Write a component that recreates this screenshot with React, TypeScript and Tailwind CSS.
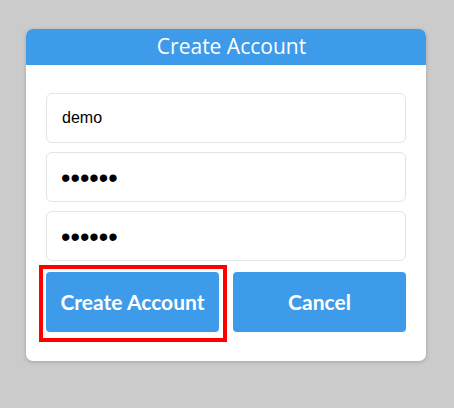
import React from "react";

export default function App() {
  const inputFont = { fontFamily: "'Liberation Sans', Arial, sans-serif" };
  return (
    <div className="w-full h-[408px] bg-[#cbcbcb] pt-[29px] pl-[26px]" style={{ fontFamily: "Lato, 'Open Sans', sans-serif" }}>
      <div className="w-[400px] h-[332px] bg-white rounded-[7px] shadow-[0_1px_4px_rgba(0,0,0,0.2)] overflow-hidden">
        <div
          className="h-[36px] bg-[#3e9bea] flex items-center justify-center text-white text-[21px] pl-[11px]"
          style={{ fontFamily: "'Open Sans', sans-serif" }}
        >
          Create Account
        </div>
        <div className="px-[20px] pt-[28px] flex flex-col">
          <input
            readOnly
            value="demo"
            className="h-[50px] border border-[#e3e3e3] rounded-[6px] px-[15px] text-[16px] text-black outline-none"
            style={inputFont}
          />
          <input
            readOnly
            type="password"
            value="123456"
            className="mt-[9px] h-[50px] border border-[#e3e3e3] rounded-[6px] pl-[14px] pr-[15px] pt-[3px] text-[27px] text-black outline-none"
            style={inputFont}
          />
          <input
            readOnly
            type="password"
            value="123456"
            className="mt-[9px] h-[50px] border border-[#e3e3e3] rounded-[6px] pl-[14px] pr-[15px] pt-[3px] text-[27px] text-black outline-none"
            style={inputFont}
          />
          <div className="mt-[11px] flex gap-[14px]">
            <div className="relative">
              <button className="w-[173px] h-[60px] rounded-[4px] bg-[#3e9bea] text-white font-bold text-[21px]">
                Create Account
              </button>
              <span className="pointer-events-none absolute -left-[7px] -top-[7px] -right-[8px] -bottom-[10px] border-4 border-[#ff0000]" />
            </div>
            <button className="w-[173px] h-[60px] rounded-[4px] bg-[#3e9bea] text-white font-bold text-[21px]">
              Cancel
            </button>
          </div>
        </div>
      </div>
    </div>
  );
}
